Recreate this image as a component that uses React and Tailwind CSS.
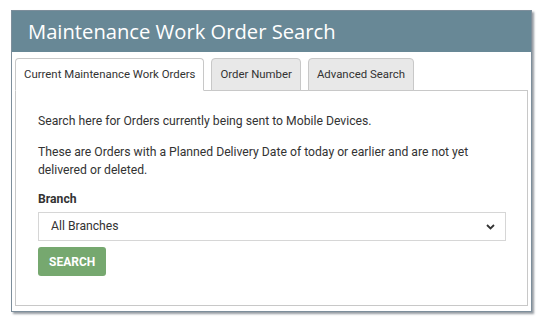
export default function App() {
  const tabs = ["Current Maintenance Work Orders", "Order Number", "Advanced Search"];

  return (
    <div className="min-h-screen bg-white pt-[10px] pl-[11px]" style={{ fontFamily: "Roboto, 'Liberation Sans', sans-serif" }}>
      {/* ===== Frame ===== */}
      <div className="w-[521px] h-[302px] border border-[#7d8e9b] bg-white shadow-[2px_2px_2px_rgba(80,90,100,0.6)] flex flex-col">
        <div className="h-[41px] shrink-0 bg-[#688896] flex items-center pl-[16px]">
          <h1 className="text-white text-[20.2px] leading-none" style={{ fontFamily: "'Open Sans', 'Noto Sans', sans-serif" }}>
            Maintenance Work Order Search
          </h1>
        </div>

        <div className="flex-1 flex flex-col px-[3px] pt-[6px] pb-[5px]">
          {/* Tabs */}
          <div className="flex gap-[7px] h-[33px] shrink-0 relative z-10">
            {tabs.map((t, i) => (
              <div
                key={t}
                className={
                  i === 0
                    ? "px-[8px] flex items-center text-[11.4px] text-[#333] bg-white border border-[#c8c8c8] border-b-white rounded-t-[4px]"
                    : "px-[8px] flex items-center text-[11.4px] text-[#333] bg-[#e8e8e8] border border-[#c8c8c8] rounded-t-[4px]"
                }
              >
                {t}
              </div>
            ))}
          </div>

          {/* Panel */}
          <div className="flex-1 border border-[#c8c8c8] -mt-px px-[22px] pt-[21px] text-[12.2px] text-[#333]">
            <p className="leading-[18px]">Search here for Orders currently being sent to Mobile Devices.</p>
            <p className="leading-[18px] mt-[13px]">
              These are Orders with a Planned Delivery Date of today or earlier and are not yet delivered or deleted.
            </p>
            <p className="font-bold mt-[11px] leading-[18px]">Branch</p>
            <div className="mt-[4px] h-[29px] border border-[#d6d6d6] flex items-center justify-between px-[12px] w-[468px]">
              <span>All Branches</span>
              <svg width="9" height="6" viewBox="0 0 9 6" className="mr-[-2px]">
                <path d="M1 1l3.5 3.5L8 1" stroke="#333" strokeWidth="1.8" fill="none" />
              </svg>
            </div>
            <button className="mt-[6px] h-[29px] px-[11px] rounded-[3px] bg-[#76a86f] text-white font-bold text-[12px]">
              SEARCH
            </button>
          </div>
        </div>
      </div>
    </div>
  );
}
